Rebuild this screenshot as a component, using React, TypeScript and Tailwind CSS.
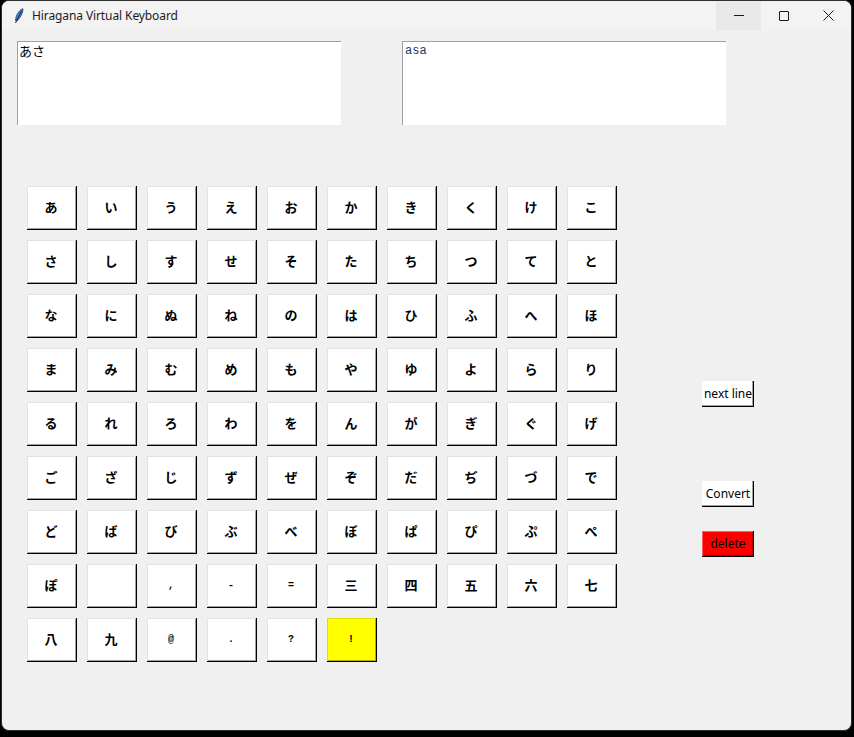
import React from "react";

const ROWS: string[][] = [
  ["あ", "い", "う", "え", "お", "か", "き", "く", "け", "こ"],
  ["さ", "し", "す", "せ", "そ", "た", "ち", "つ", "て", "と"],
  ["な", "に", "ぬ", "ね", "の", "は", "ひ", "ふ", "へ", "ほ"],
  ["ま", "み", "む", "め", "も", "や", "ゆ", "よ", "ら", "り"],
  ["る", "れ", "ろ", "わ", "を", "ん", "が", "ぎ", "ぐ", "げ"],
  ["ご", "ざ", "じ", "ず", "ぜ", "ぞ", "だ", "ぢ", "づ", "で"],
  ["ど", "ば", "び", "ぶ", "べ", "ぼ", "ぱ", "ぴ", "ぷ", "ぺ"],
  ["ぽ", " ", ",", "-", "=", "三", "四", "五", "六", "七"],
  ["八", "九", "@", ".", "?", "!"],
];

const isAscii = (k: string) => /^[ -~]$/.test(k);

function Key({ k }: { k: string }) {
  const yellow = k === "!";
  return (
    <button
      className={
        "flex h-[44px] w-[50px] items-center justify-center pb-[2px] pr-[2px] text-black " +
        (yellow
          ? "bg-[#ffff00] shadow-[inset_-1px_-1px_0_#000,inset_1px_1px_0_#e0e000,inset_-2px_-2px_0_#b0b000]"
          : "bg-white shadow-[inset_-1px_-1px_0_#000,inset_1px_1px_0_#e3e3e3,inset_-2px_-2px_0_#a0a0a0]") +
        (isAscii(k)
          ? " font-['Liberation_Mono',monospace] text-[10px] font-bold text-[#102040]"
          : " font-['Noto_Sans_CJK_JP',sans-serif] text-[13px] font-bold")
      }
    >
      {k}
    </button>
  );
}

function Feather() {
  return (
    <svg width="10" height="16" viewBox="0 0 10 16">
      <path d="M9 0.8 C5 2 2 7 1.5 12.5 L3.5 12.5 C6.5 9 9 5 9 0.8 Z" fill="#4a8ee6" stroke="#1b3d78" strokeWidth="0.9" />
      <path d="M7.5 3 L1.5 15" stroke="#1b1b1b" strokeWidth="1" />
    </svg>
  );
}

export default function App() {
  return (
    <div className="h-[737px] w-[854px] overflow-hidden bg-black font-['Noto_Sans',sans-serif]">
      <div className="ml-px h-[731px] w-[851px] overflow-hidden rounded-lg border border-[#2f2f2f] bg-[#f0f0f0]">
        {/* title bar */}
        <div className="flex h-[29px] items-center bg-[#f3f3f3]">
          <div className="ml-[3px] flex w-[27px] items-center justify-center pt-px">
            <Feather />
          </div>
          <span className="text-[12px] tracking-[-0.1px] text-[#1a1a1a]">Hiragana Virtual Keyboard</span>
          <div className="ml-auto flex h-full">
            <div className="flex h-full w-[45px] items-center justify-center bg-[#e9e9e9]">
              <div className="h-px w-[10px] bg-[#1a1a1a]" />
            </div>
            <div className="flex h-full w-[45px] items-center justify-center">
              <div className="h-[10px] w-[10px] rounded-[1px] border border-[#1a1a1a]" />
            </div>
            <div className="flex h-full w-[45px] items-center justify-center">
              <svg width="11" height="11" viewBox="0 0 11 11">
                <path d="M0.5 0.5 L10.5 10.5 M10.5 0.5 L0.5 10.5" stroke="#1a1a1a" strokeWidth="1" />
              </svg>
            </div>
          </div>
        </div>

        {/* text areas */}
        <div className="flex gap-[61px] pl-[15px] pt-[11px]">
          <div className="h-[84px] w-[324px] border-l border-t border-[#a0a0a0] bg-white px-px font-['Noto_Sans_CJK_JP',sans-serif] text-[13px] leading-[17px] text-black">
            あさ
          </div>
          <div className="h-[84px] w-[324px] border-l border-t border-[#a0a0a0] bg-white px-[2px] pt-[3px] font-['Liberation_Mono',monospace] text-[12px] leading-[13px] text-[#1c3462]">
            asa
          </div>
        </div>

        {/* keyboard */}
        <div className="mt-[61px] flex pl-[25px]">
          <div className="flex flex-col gap-[10px]">
            {ROWS.map((row, i) => (
              <div key={i} className="flex gap-[10px]">
                {row.map((k, j) => (
                  <Key key={j} k={k} />
                ))}
              </div>
            ))}
          </div>
          <div className="ml-[85px] flex flex-col pt-[195px] text-[12px]">
            <button className="flex h-[26px] w-[52px] items-center justify-center bg-white text-black shadow-[inset_-1px_-1px_0_#000,inset_-2px_-2px_0_#a0a0a0]">
              next line
            </button>
            <button className="mt-[74px] flex h-[26px] w-[52px] items-center justify-center bg-white text-black shadow-[inset_-1px_-1px_0_#000,inset_-2px_-2px_0_#a0a0a0]">
              Convert
            </button>
            <button className="mt-[24px] flex h-[26px] w-[52px] items-center justify-center bg-[#ff0000] text-black shadow-[inset_-1px_-1px_0_#000,inset_1px_1px_0_#ff6060,inset_-2px_-2px_0_#b00000]">
              delete
            </button>
          </div>
        </div>
      </div>
    </div>
  );
}
